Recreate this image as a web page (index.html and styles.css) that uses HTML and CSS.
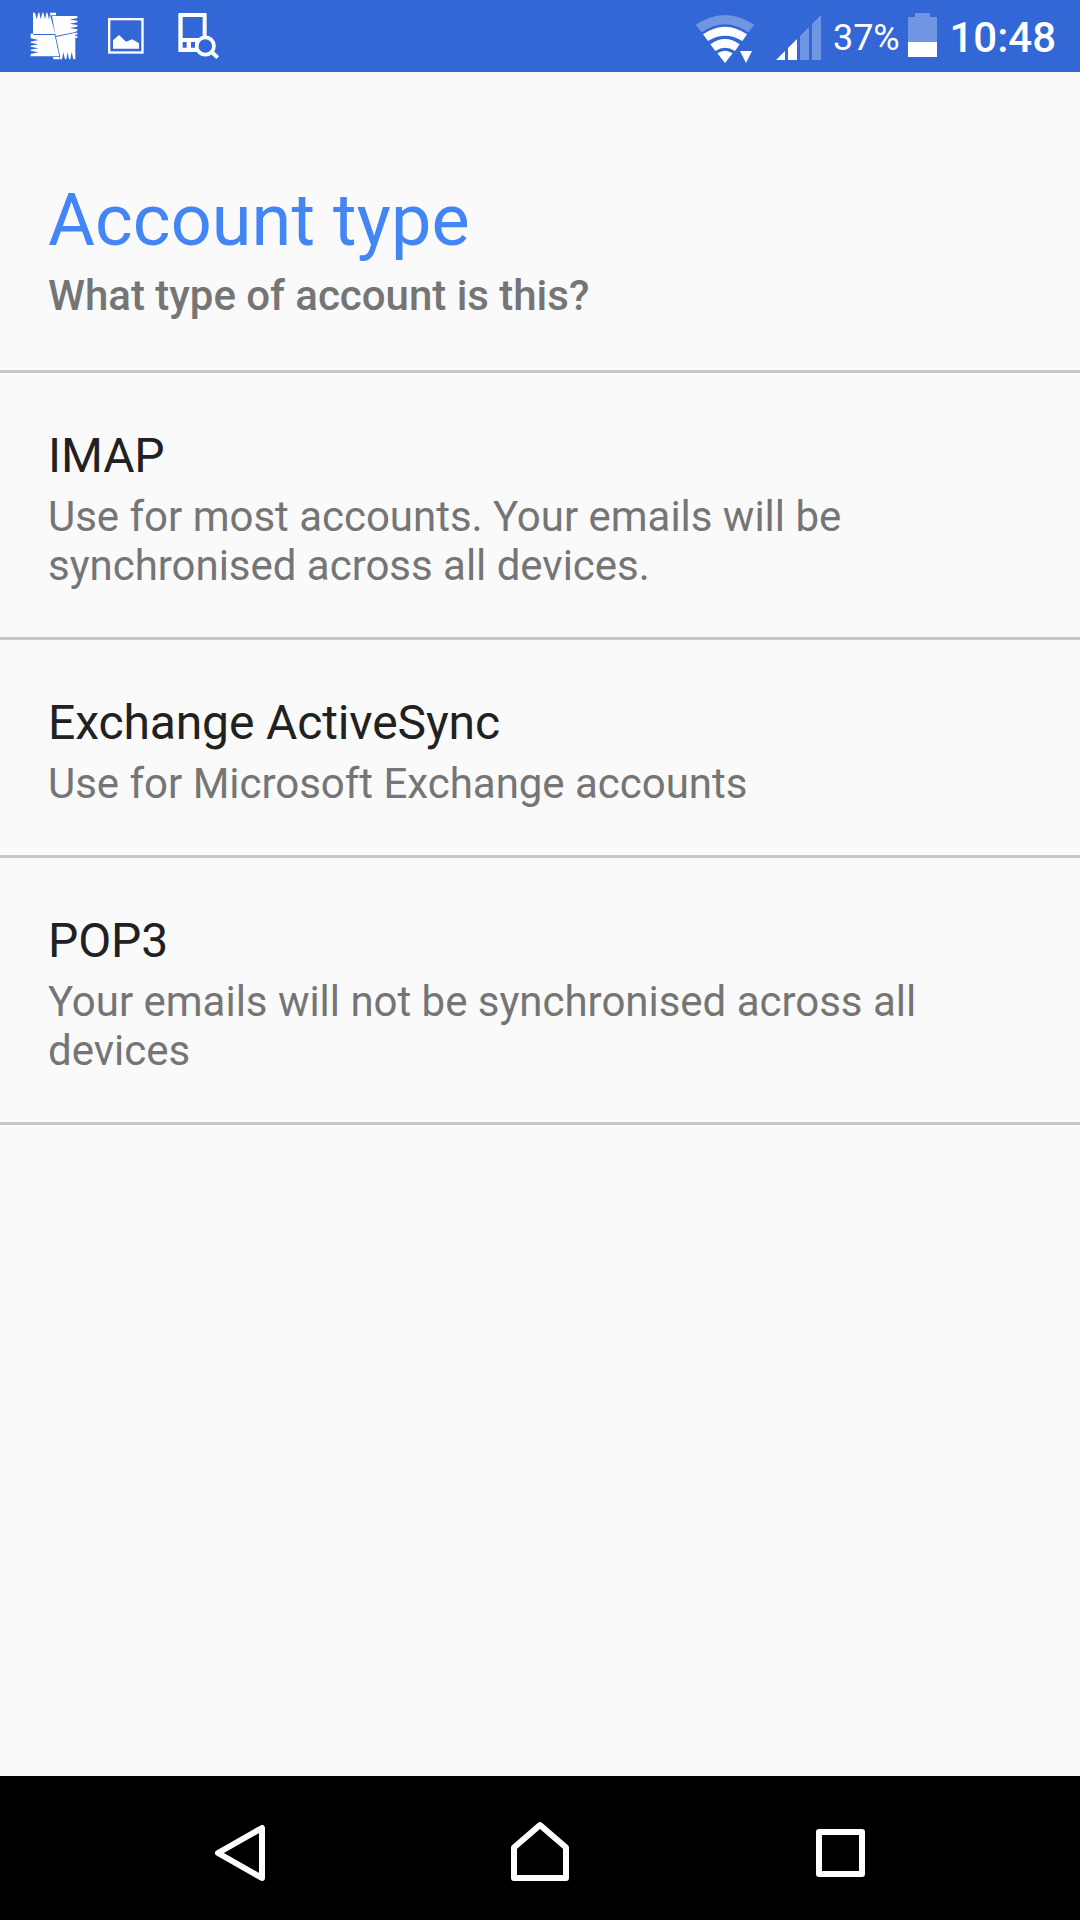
FILE: index.html
```html
<!DOCTYPE html>
<html lang="en">
<head>
<meta charset="utf-8">
<title>Account type</title>
<link rel="stylesheet" href="styles.css">
</head>
<body>
<header class="status">
  <svg class="notifications" width="240" height="72" viewBox="0 0 720 216">
    <!-- puzzle-like app mark -->
    <g transform="translate(60 0)" fill="#fff">
      <path d="M39 38H45L50 58L55 38H58L62 58L67 38H70L75 58L79 38H82L87 58L90 44L106 102H39ZM90 38H108V46H91Z"/>
      <path d="M96 48H172V54L149 59L172 62V67L149 71L172 75V80L149 84L172 88V92L166 96L107 108ZM166 98H172V104H166ZM166 108H172V114H166Z"/>
      <path d="M32 101H40V105H104L118 169H32V162L55 157L32 152V149L55 145L32 140V137L55 133L32 128V125L55 120L32 115Z"/>
      <path d="M108 111L166 98V178H160L155 157L151 178H147L143 157L139 178H135L130 157L126 178H120V168ZM99 171H118L119 178H100Z"/>
    </g>
    <!-- picture -->
    <g transform="translate(285 0)">
      <rect x="42.500" y="57.500" width="100" height="100" fill="none" stroke="#fff" stroke-width="7"/>
      <path d="M54 146V121L72 105L93 125L112 118L132 130V146Z" fill="#fff"/>
    </g>
    <!-- device search -->
    <g transform="translate(285 0)">
      <path fill="#fff" fill-rule="evenodd" d="M253 39H332Q335 39 335 42V156H250V42Q250 39 253 39ZM263 51V114H323V51ZM263 126V143H275V126ZM288 126V143H300V126Z"/>
      <circle cx="331" cy="138" r="26" fill="#3367d6" stroke="#fff" stroke-width="11"/>
      <path d="M350 156L368 173" stroke="#fff" stroke-width="12"/>
    </g>
  </svg>
  <div class="system">
    <svg width="142" height="72" viewBox="30 0 426 216">
      <g fill="#fff">
        <path fill-opacity=".3" d="M47 75Q135 15 223 75L205 97Q135 48 65 97Z"/>
        <path d="M69 103Q135 57 201 103L187 123Q135 92 84 123Z"/>
        <path d="M91 133Q135 101 179 133L165 153Q135 134 106 153Z"/>
        <path d="M112 160Q135 145 158 160L135 189Z"/>
        <path d="M180 153H216L198 189Z"/>
        <path d="M288 180L315 153V180ZM324 180V144L351 117V180Z"/>
        <path fill-opacity=".3" d="M360 180V108L387 81V180ZM396 180V72L423 45V180Z"/>
      </g>
    </svg>
    <span class="percent">37%</span>
    <svg width="37" height="72" viewBox="0 0 37 72">
      <path d="M8 17H15V13H30V17H37V42H8Z" fill="#fff" fill-opacity=".3"/>
      <path d="M8 42H37V57H8Z" fill="#fff"/>
    </svg>
    <span class="clock">10:48</span>
  </div>
</header>
<main>
  <section class="intro"><h1>Account type</h1><p>What type of account is this?</p></section>
  <section class="option"><h2>IMAP</h2><p>Use for most accounts. Your emails will be synchronised across all devices.</p></section>
  <section class="option"><h2>Exchange ActiveSync</h2><p>Use for Microsoft Exchange accounts</p></section>
  <section class="option"><h2>POP3</h2><p>Your emails will not be synchronised across all devices</p></section>
</main>
<nav class="navbar">
  <svg width="60" height="144" viewBox="210 1776 60 144"><path d="M262 1828V1878L218 1853Z"/></svg>
  <svg width="60" height="144" viewBox="510 1776 60 144"><path d="M514 1847.500L540 1825L566 1847.500V1878H514Z"/></svg>
  <svg width="60" height="144" viewBox="810 1776 60 144"><path d="M819 1832H862V1874H819Z"/></svg>
</nav>
</body>
</html>
```
FILE: styles.css
```css
* { box-sizing: border-box; margin: 0; padding: 0; }
body {
  width: 1080px;
  height: 1920px;
  display: flex;
  flex-direction: column;
  background: #fafafa;
  font-family: Roboto, sans-serif;
  overflow: hidden;
}
.status {
  height: 72px;
  display: flex;
  justify-content: space-between;
  background: #3367d6;
  color: #fff;
}
.system { width: 390px; display: flex; align-items: center; padding-right: 24px; }
.percent { width: 68px; padding: 4px 0 0 1px; font-size: 36px; line-height: 42px; letter-spacing: -.1px; white-space: nowrap; }
.clock { margin-left: auto; padding-top: 3px; font-size: 42px; line-height: 49px; font-weight: 500; }
main { flex: 1; }
.intro { height: 301px; padding: 106px 48px 0; border-bottom: 3px solid #c8c8c8; }
h1 { font-size: 72px; line-height: 85px; font-weight: 400; letter-spacing: .1px; color: #4285f4; }
.intro p { margin-top: 8px; font-size: 42px; line-height: 49px; font-weight: 500; letter-spacing: -.02px; color: #757575; }
.option { padding: 54px 48px 47px; border-bottom: 3px solid #c8c8c8; }
h2 { font-size: 48px; line-height: 57px; font-weight: 400; letter-spacing: -.12px; color: #212121; }
.option p { margin-top: 8px; font-size: 42px; line-height: 49px; letter-spacing: -.02px; color: #757575; }
.navbar { height: 144px; padding: 0 210px; display: flex; justify-content: space-between; background: #000; }
.navbar path { fill: none; stroke: #fff; stroke-width: 6; stroke-linejoin: round; }
```
